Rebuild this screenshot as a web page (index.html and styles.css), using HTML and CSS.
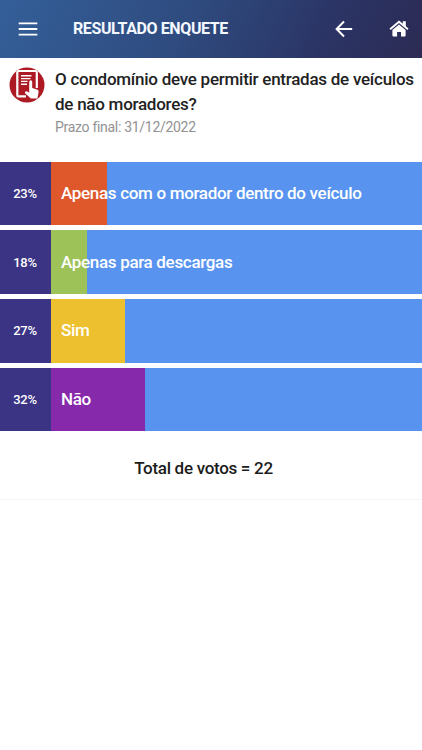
FILE: index.html
```html
<!DOCTYPE html>
<html lang="pt-br">

<head>
    <meta charset="UTF-8">
    <meta name="viewport" content="width=device-width, initial-scale=1.0">
    <title>Resultado Enquete</title>
    <link rel="stylesheet" href="styles.css">
</head>

<body>
    <header class="topo">
        <svg class="menu" viewBox="0 0 20 14" width="20" height="14">
            <path d="M0.7 1.4H19.3M0.7 7H19.3M0.7 12.6H19.3" stroke="#fff" stroke-width="1.9" />
        </svg>
        <h1>RESULTADO ENQUETE</h1>
        <svg class="voltar" viewBox="0 0 18 18" width="18" height="18">
            <path d="M17.2 9H2M9 1.5L1.6 9L9 16.5" fill="none" stroke="#fff" stroke-width="2" />
        </svg>
        <svg class="home" viewBox="0 0 20 18" width="20" height="18">
            <path d="M3.4 10.1L10 4.6L16.6 10.1V15.6Q16.6 16.6 15.6 16.6H12V12H8.1V16.6H4.4Q3.4 16.6 3.4 15.6Z" fill="#fff" />
            <path d="M1.1 9.2L10 1.8L18.9 9.2" fill="none" stroke="#fff" stroke-width="1.9" />
            <path d="M13.8 1.2H16.8V7.5L13.8 5Z" fill="#fff" />
        </svg>
    </header>

    <section class="enquete">
        <svg class="logo" viewBox="0 0 36 36" width="36" height="36">
            <circle cx="18" cy="18" r="17.5" fill="#ad1a24" />
            <path d="M17 29.3H9.4Q8.3 29.3 8.3 28.2V5Q8.3 4 9.4 4H26.6Q27.8 4 27.8 5.2V21" fill="none" stroke="#fff" stroke-width="2.2" />
            <path d="M12 8.8H22.5M12 11.6H21.5M12 14.4H18.5M12 17.2H18" stroke="#fff" stroke-width="1.4" />
            <path d="M20.2 14.9Q20.2 13.3 21.7 13.3Q23.2 13.3 23.2 14.9V21L28.2 22.4Q29.9 23 29.6 25.2L28.4 31.6H21.8L15.8 26Q16 23.6 18.2 24.5L20.2 25.8Z" fill="#fff" />
        </svg>
        <div>
            <h2>O condomínio deve permitir entradas de veículos<br>de não moradores?</h2>
            <p>Prazo final: 31/12/2022</p>
        </div>
    </section>

    <ul class="opcoes">
        <li>
            <span class="pct">23%</span>
            <div class="barra">
                <div class="cor laranja" style="width: 15.2%"></div>
                <span>Apenas com o morador dentro do veículo</span>
            </div>
        </li>
        <li>
            <span class="pct">18%</span>
            <div class="barra">
                <div class="cor verde" style="width: 9.6%"></div>
                <span>Apenas para descargas</span>
            </div>
        </li>
        <li>
            <span class="pct">27%</span>
            <div class="barra">
                <div class="cor amarelo" style="width: 19.9%"></div>
                <span>Sim</span>
            </div>
        </li>
        <li>
            <span class="pct">32%</span>
            <div class="barra">
                <div class="cor roxo" style="width: 25.4%"></div>
                <span>Não</span>
            </div>
        </li>
    </ul>

    <p class="total">Total de votos = 22</p>
</body>

</html>
```
FILE: styles.css
```css
* {
    padding: 0;
    margin: 0;
    box-sizing: border-box;
}

body {
    background-color: #fff;
    font-family: Roboto, "Liberation Sans", sans-serif;
    letter-spacing: -0.3px;
}

.topo {
    display: flex;
    align-items: center;
    height: 58px;
    padding: 0 13px 0 18px;
    background: linear-gradient(115deg, #345f99 0%, #2f4c80 42%, #2b3566 75%, #2c2b54 100%);
}

.topo h1 {
    flex: 1;
    margin-left: 35px;
    color: #f4f8ff;
    font-size: 16px;
    font-weight: 700;
    letter-spacing: -0.4px;
    line-height: 18px;
    padding-bottom: 1px;
    white-space: nowrap;
}

.voltar {
    margin-right: 36px;
}

.enquete {
    display: flex;
    height: 103.6px;
    padding: 9px 0 0 9px;
}

.enquete .logo {
    flex: none;
    margin-right: 10px;
}

.enquete h2 {
    color: #222;
    font-size: 17px;
    font-weight: 500;
    letter-spacing: -0.26px;
    line-height: 25px;
    white-space: nowrap;
}

.enquete p {
    color: #929292;
    font-size: 14px;
    line-height: 20px;
}

.opcoes {
    list-style: none;
}

.opcoes li {
    display: flex;
    height: 63.5px;
    margin-bottom: 5.3px;
}

.pct {
    display: flex;
    align-items: center;
    justify-content: center;
    width: 51px;
    padding-right: 1px;
    background-color: #3b3484;
    color: #fff;
    font-size: 13px;
    font-weight: 500;
}

.barra {
    display: flex;
    position: relative;
    flex: 1;
    align-items: center;
    background-color: #5894ef;
}

.barra span {
    position: relative;
    padding: 0 0 1px 10px;
    color: #fff;
    font-size: 17px;
    font-weight: 500;
    letter-spacing: -0.32px;
}

/* faixa colorida por baixo do texto */
.cor {
    position: absolute;
    top: 0;
    left: 0;
    height: 100%;
}

.laranja {
    background-color: #df582b;
}

.verde {
    background-color: #9dc257;
}

.amarelo {
    background-color: #edc02f;
}

.roxo {
    background-color: #8629ab;
}

.total {
    height: 63.5px;
    padding: 20px 15px 0 0;
    border-bottom: 1px solid #f6f6f6;
    color: #1c1c1c;
    font-size: 17px;
    font-weight: 500;
    line-height: 22px;
    text-align: center;
}
```
